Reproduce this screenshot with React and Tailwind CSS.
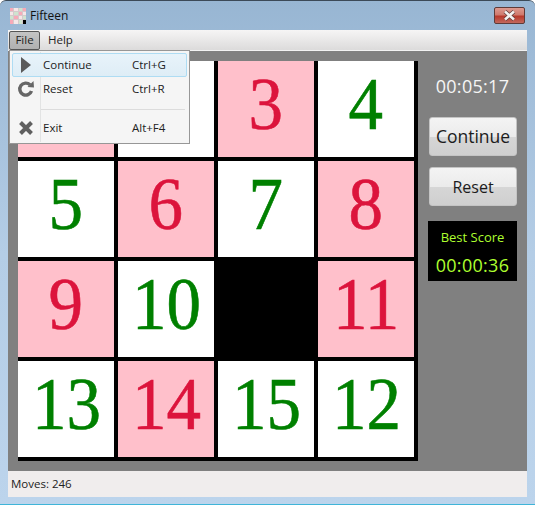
import React from 'react';

const uiFont = { fontFamily: '"Open Sans", "Noto Sans", sans-serif' };

// tiles 1 and 2 sit under the open menu, so their digits never show
const tiles = [
    { id: 1, pink: true }, { id: 2 }, { id: 3, n: 3, pink: true }, { id: 4, n: 4 },
    { id: 5, n: 5 }, { id: 6, n: 6, pink: true }, { id: 7, n: 7 }, { id: 8, n: 8, pink: true },
    { id: 9, n: 9, pink: true }, { id: 10, n: 10 }, { id: 0, blank: true }, { id: 11, n: 11, pink: true },
    { id: 13, n: 13 }, { id: 14, n: 14, pink: true }, { id: 15, n: 15 }, { id: 12, n: 12 },
];

const Tile = ({ n, pink, blank }) => {
    if (blank) return <div className="w-[100px] h-[100px] bg-black" />;
    return (
        <div className="w-[100px] h-[100px] bg-black">
            <div className={`w-[96px] h-[96px] pb-[11px] flex items-center justify-center font-['Liberation_Serif',serif] text-[75px] leading-none ${pink ? 'bg-[#ffc0cb] text-[#dc143c]' : 'bg-white text-[#008000]'}`}>
                <span className="inline-block scale-x-[0.92] [-webkit-text-stroke:0.6px_currentColor]">{n}</span>
            </div>
        </div>
    );
};

const AppIcon = () => (
    <div className="grid grid-cols-4 grid-rows-4 w-[16px] h-[16px] gap-px bg-[#d5c9cb]">
        {tiles.map((t, i) => (
            <div key={t.id} className={i === 15 ? 'bg-black' : i % 3 === 0 ? 'bg-[#f7a9b8]' : i % 3 === 1 ? 'bg-[#f6e6e8]' : 'bg-[#cfe3cf]'} />
        ))}
    </div>
);

const MenuRow = ({ icon, label, shortcut, active }) => (
    <div className={`relative flex items-center h-[24px] mx-[2px] rounded-[2px] text-[11.5px] text-[#222] ${active ? 'border border-[#aedcf3] bg-gradient-to-b from-[#e8f3fa] to-[#deedf6]' : 'border border-transparent'}`}>
        <div className="w-[25px] flex justify-center">{icon}</div>
        <span className="ml-[5px] w-[89px]">{label}</span>
        <span>{shortcut}</span>
    </div>
);

const btn = 'w-[88px] self-end rounded-[3px] border border-[#c4c4c4] bg-[linear-gradient(#f4f4f4_0%,#ebebeb_50%,#d6d6d6_52%,#cfcfcf_100%)] text-[#1c1c1c]';

const App = () => {
    return (
        <div className="relative w-[535px] h-[505px] overflow-hidden flex flex-col rounded-t-[6px] border-t border-[#3c4a58] bg-gradient-to-b from-[#98b6d3] via-[#b4cde6] to-[#bcd4ec]" style={uiFont}>
            {/* title bar */}
            <div className="flex items-center h-[29px] pl-[10px] pr-[10px] shrink-0">
                <AppIcon />
                <span className="ml-[4px] text-[12px] text-[#111]">Fifteen</span>
                <div className="ml-auto w-[31px] h-[17px] -mt-[1px] rounded-[2px] border border-[#5e3b38] bg-[linear-gradient(#dd9a90_0%,#cf7a6e_45%,#b8392c_55%,#c2685c_100%)] flex items-center justify-center">
                    <svg width="15" height="11" viewBox="0 0 15 11">
                        <path d="M3 1.5 L12 9.5 M12 1.5 L3 9.5" stroke="#5a3a38" strokeWidth="4" />
                        <path d="M3 1.5 L12 9.5 M12 1.5 L3 9.5" stroke="#f4f1f0" strokeWidth="2.6" />
                    </svg>
                </div>
            </div>

            {/* menu bar */}
            <div className="mx-[8px] w-[519px] h-[21px] shrink-0 flex items-center bg-gradient-to-b from-[#f6f5f5] to-[#dcdbdb] border-b border-[#f2f2f2] text-[11.5px] text-[#222]">
                <div className="w-[31px] h-[19px] ml-px flex items-center justify-center rounded-[2px] border border-[#555] bg-gradient-to-b from-[#c4c4c4] to-[#b0b0b0]">File</div>
                <span className="ml-[8px]">Help</span>
            </div>

            {/* game area */}
            <div className="mx-[8px] w-[519px] h-[420px] shrink-0 bg-[#808080] flex pl-[10px] pt-[10px]">
                <div className="grid grid-cols-4 w-[400px] h-[400px]">
                    {tiles.map(t => <Tile key={t.id} {...t} />)}
                </div>
                <div className="ml-[10px] w-[89px] flex flex-col items-center">
                    <div className="mt-[13px] text-[18px] leading-[24px] text-[#f5f5f5] tracking-[0.3px]">00:05:17</div>
                    <button className={`mt-[19px] h-[39px] text-[17.5px] ${btn}`}>Continue</button>
                    <button className={`mt-[11px] h-[39px] text-[16px] ${btn}`}>Reset</button>
                    <div className="mt-[15px] w-full h-[60px] bg-black flex flex-col items-center text-[#adff2f]">
                        <div className="mt-[7px] text-[13px] leading-[18px]">Best Score</div>
                        <div className="mt-[7px] text-[18px] leading-[24px] tracking-[0.3px]">00:00:36</div>
                    </div>
                </div>
            </div>

            {/* status bar */}
            <div className="mx-[8px] w-[519px] h-[26px] shrink-0 bg-[#f0eded] flex items-center pl-[3px] text-[11.5px] text-[#222]">Moves: 246</div>
            <div className="mt-auto h-px bg-[#3fb4d8]" />

            {/* open File menu */}
            <div className="absolute left-[9px] top-[49px] w-[181px] h-[94px] border border-[#979797] bg-[#f5f5f5] pt-[2px]">
                <div className="absolute left-[30px] top-px bottom-px w-px bg-[#e2e3e3]" />
                <MenuRow active label="Continue" shortcut="Ctrl+G" icon={
                    <svg width="12" height="16" viewBox="0 0 12 16"><path d="M1 0 L11 8 L1 16 Z" fill="#5a5a5a" /></svg>
                } />
                <MenuRow label="Reset" shortcut="Ctrl+R" icon={
                    <svg width="18" height="18" viewBox="0 0 18 18"><path d="M14.5 11 A6 6 0 1 1 13 4.8" fill="none" stroke="#666" strokeWidth="3.4" /><path d="M10.5 7 L17 7.5 L16.5 1 Z" fill="#666" /></svg>
                } />
                <div className="ml-[31px] mr-[4px] mt-[8px] h-px bg-[#dcdcdc]" />
                <div className="mt-[6px]">
                    <MenuRow label="Exit" shortcut="Alt+F4" icon={
                        <svg width="16" height="16" viewBox="0 0 16 16"><path d="M2.5 2.5 L13.5 13.5 M13.5 2.5 L2.5 13.5" stroke="#5f5f5f" strokeWidth="4" /></svg>
                    } />
                </div>
            </div>
        </div>
    );
};

export default App;
